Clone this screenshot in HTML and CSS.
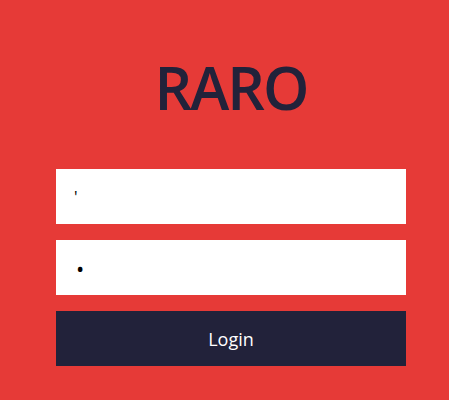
FILE: index.html
```html
<!DOCTYPE html>
<html>
<head>
<meta charset="utf-8">
<link rel="stylesheet" href="styles.css">
</head>
<body>
<main class="page">
  <form class="login">
    <h1 class="brand">RARO</h1>
    <input class="field" type="text" value="'">
    <input class="field field--secret" type="password" value="x">
    <button class="submit" type="button">Login</button>
  </form>
</main>
</body>
</html>
```
FILE: styles.css
```css
html, body {
  margin: 0;
  padding: 0;
  background: #e63a37;
}
.page {
  height: 400px;
  padding-left: 56px;
  box-sizing: border-box;
}
.login {
  width: 350px;
  display: flex;
  flex-direction: column;
  padding-top: 45px;
}
.brand {
  margin: 0 0 40px;
  text-align: center;
  font-family: "Open Sans", sans-serif;
  font-weight: 600;
  font-size: 59px;
  letter-spacing: -2px;
  line-height: 84px;
  height: 84px;
  color: #22223a;
}
.field {
  height: 55px;
  border: 0;
  margin: 0 0 16px;
  padding: 0 18px;
  box-sizing: border-box;
  background: #fff;
  font-family: "Open Sans", sans-serif;
  font-size: 16px;
  color: #000;
  outline: none;
}
.field--secret {
  padding-left: 20px;
  font-size: 22px;
}
.submit {
  height: 55px;
  border: 0;
  margin: 0;
  background: #22223a;
  color: #fff;
  font-family: "Open Sans", sans-serif;
  font-size: 18px;
}
```
